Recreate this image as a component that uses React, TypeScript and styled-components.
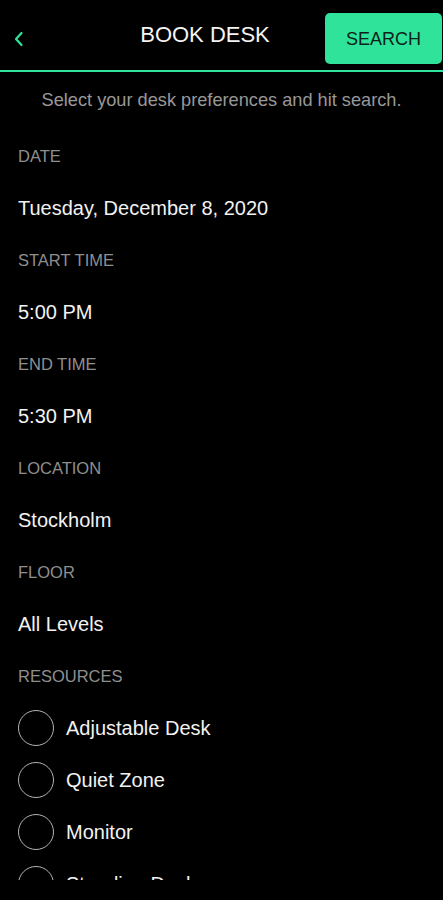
import React from "react";
import styled, { createGlobalStyle } from "styled-components";

const GlobalStyle = createGlobalStyle`
  html,
  body {
    margin: 0;
    padding: 0;
    background-color: #000;
  }

  * {
    box-sizing: border-box;
  }
`;

const GREEN = "#2fe39a";

const Screen = styled.div`
  width: 443px;
  height: 900px;
  display: flex;
  flex-direction: column;
  background-color: #000;
  font-family: "Liberation Sans", Arial, sans-serif;
  color: #f2f2f2;
`;

const Header = styled.header`
  height: 72px;
  flex-shrink: 0;
  display: flex;
  align-items: flex-start;
  padding-top: 13px;
  border-bottom: 2px solid ${GREEN};
`;

const BackSlot = styled.div`
  width: 85px;
  height: 51px;
  display: flex;
  align-items: center;
  padding-left: 13px;
`;

const BackButton = styled.button`
  padding: 0;
  border: none;
  background: none;
  display: flex;
  cursor: pointer;
`;

const Title = styled.h1`
  flex-grow: 1;
  margin: 0;
  height: 44px;
  display: flex;
  align-items: center;
  justify-content: center;
  font-size: 22px;
  font-weight: 400;
  color: #f4f4f4;
`;

const SearchButton = styled.button`
  width: 117px;
  height: 51px;
  margin-right: 1px;
  border: none;
  border-radius: 5px;
  background-color: ${GREEN};
  color: #0c2418;
  font-family: inherit;
  font-size: 18px;
  padding-top: 2px;
  cursor: pointer;
`;

const Body = styled.main`
  height: 808px;
  flex-shrink: 0;
  overflow: hidden;
  display: flex;
  flex-direction: column;
`;

const Intro = styled.p`
  margin: 0;
  height: 58px;
  flex-shrink: 0;
  display: flex;
  align-items: center;
  justify-content: center;
  padding-bottom: 2px;
  font-size: 18.2px;
  color: #989898;
`;

const Label = styled.div`
  height: 52px;
  flex-shrink: 0;
  display: flex;
  align-items: center;
  padding-left: 18px;
  font-size: 16.5px;
  color: #8f8f8f;
`;

const Value = styled.div`
  height: 52px;
  flex-shrink: 0;
  display: flex;
  align-items: center;
  padding-left: 18px;
  font-size: 20px;
  color: #f2f2f2;
`;

const Option = styled.label`
  height: 52px;
  flex-shrink: 0;
  display: flex;
  align-items: center;
  gap: 12px;
  padding-left: 18px;
  font-size: 20px;
  color: #f2f2f2;
  cursor: pointer;
`;

const Radio = styled.span<{ $checked?: boolean }>`
  width: 36px;
  height: 36px;
  flex-shrink: 0;
  border-radius: 50%;
  border: 1.5px solid #b4b4b4;
  background-color: ${(p) => (p.$checked ? GREEN : "transparent")};
`;

const fields = [
  { label: "DATE", value: "Tuesday, December 8, 2020" },
  { label: "START TIME", value: "5:00 PM" },
  { label: "END TIME", value: "5:30 PM" },
  { label: "LOCATION", value: "Stockholm" },
  { label: "FLOOR", value: "All Levels" },
];

const resources = ["Adjustable Desk", "Quiet Zone", "Monitor", "Standing Desk"];

function BackIcon() {
  return (
    <svg width="12" height="18" viewBox="0 0 12 18" fill="none">
      <polyline
        points="8.5,3 3,9 8.5,15"
        stroke={GREEN}
        strokeWidth="2.2"
        strokeLinecap="round"
        strokeLinejoin="round"
      />
    </svg>
  );
}

function App() {
  return (
    <>
      <GlobalStyle />
      <Screen>
        <Header>
          <BackSlot>
            <BackButton aria-label="Back">
              <BackIcon />
            </BackButton>
          </BackSlot>
          <Title>BOOK DESK</Title>
          <SearchButton>SEARCH</SearchButton>
        </Header>
        <Body>
          <Intro>Select your desk preferences and hit search.</Intro>
          {fields.map((f) => (
            <React.Fragment key={f.label}>
              <Label>{f.label}</Label>
              <Value>{f.value}</Value>
            </React.Fragment>
          ))}
          <Label>RESOURCES</Label>
          {resources.map((r) => (
            <Option key={r}>
              <Radio />
              {r}
            </Option>
          ))}
        </Body>
      </Screen>
    </>
  );
}

export default App;
